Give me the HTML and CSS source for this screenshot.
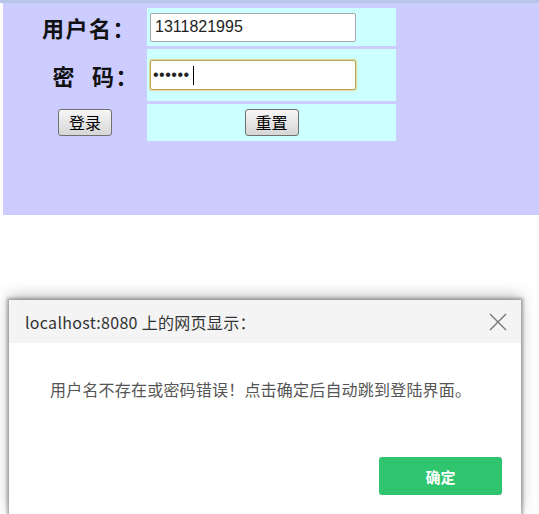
FILE: index.html
```html
<!DOCTYPE html>
<html lang="zh-CN">
<head>
<meta charset="utf-8">
<title>登录</title>
<link rel="stylesheet" href="styles.css">
</head>
<body>
<div class="topbar"></div>
<div class="panel">
  <div class="form">
    <div class="label row1">用户名：</div>
    <div class="field"><input class="inp" type="text" value="1311821995"></div>
    <div class="label row2">密<span class="sp"></span>码：</div>
    <div class="field"><span class="pwwrap"><input class="inp focus" type="password" value="123456"><span class="caret"></span></span></div>
    <div class="label row3"><button class="btn">登录</button></div>
    <div class="field center"><button class="btn">重置</button></div>
  </div>
</div>
<div class="dialog">
  <div class="dlg-head">
    <span class="dlg-title">localhost:8080 上的网页显示：</span>
    <svg class="close" width="18" height="18" viewBox="0 0 18 18"><path d="M1 1 L17 17 M17 1 L1 17" stroke="#777" stroke-width="1.4" fill="none"/></svg>
  </div>
  <div class="dlg-body">
    <p class="msg">用户名不存在或密码错误！点击确定后自动跳到登陆界面。</p>
    <div class="actions"><button class="ok">确定</button></div>
  </div>
</div>
</body>
</html>
```
FILE: styles.css
```css
html, body {
  margin: 0;
  padding: 0;
  background: #ffffff;
  overflow: hidden;
}
.topbar {
  height: 3px;
  background: #b7c6ea;
}
.panel {
  margin-left: 3px;
  height: 207px;
  padding-top: 5px;
  background: #ccccff;
}
.form {
  display: grid;
  grid-template-columns: 142px 249px;
  grid-template-rows: 38px 52px 37px;
  column-gap: 2px;
  row-gap: 3px;
}
.label {
  display: flex;
  align-items: center;
  justify-content: flex-end;
  padding-right: 9px;
  font-family: "Noto Sans CJK SC", sans-serif;
  font-weight: 700;
  font-size: 22px;
  color: #111;
  letter-spacing: 1.5px;
}
.label.row2 {
  padding-right: 6px;
}
.sp {
  display: inline-block;
  width: 16px;
}
.label.row3 {
  justify-content: center;
  padding-right: 0;
  padding-left: 22px;
}
.field {
  background: #ccffff;
  display: flex;
  align-items: center;
  padding-left: 3px;
}
.field.center {
  justify-content: center;
  padding-left: 0;
}
.pwwrap {
  position: relative;
  display: inline-block;
}
.inp {
  box-sizing: border-box;
  width: 206px;
  height: 29px;
  margin: 0;
  padding: 0 4px;
  border: 1px solid #a7a7a7;
  border-radius: 2px;
  background: #fff;
  font-family: "Liberation Sans", Arial, sans-serif;
  font-size: 16px;
  color: #222;
  outline: none;
}
.inp.focus {
  height: 30px;
  padding: 0 2px;
  border: 1px solid #bba650;
  box-shadow: 0 0 1px 1px #e3d9a0;
  letter-spacing: 0.5px;
}
.caret {
  position: absolute;
  left: 43px;
  top: 6px;
  width: 1px;
  height: 19px;
  background: #000;
}
.btn {
  box-sizing: border-box;
  width: 54px;
  height: 27px;
  margin: 0;
  padding: 0;
  border: 1px solid #707070;
  border-radius: 3px;
  background: linear-gradient(#f7f7f7, #e6e6e6 50%, #d6d6d6);
  font-family: "Noto Sans CJK SC", sans-serif;
  font-size: 16px;
  color: #000;
  line-height: 25px;
}
.dialog {
  margin-top: 85px;
  margin-left: 9px;
  width: 512px;
  height: 214px;
  background: #fff;
  box-shadow: 0 -4px 14px rgba(0,0,0,0.25), 0 0 3px 2px rgba(0,0,0,0.3);
}
.dlg-head {
  height: 43px;
  background: #f4f4f4;
  display: flex;
  align-items: center;
  justify-content: space-between;
  padding: 0 14px 0 16px;
}
.dlg-title {
  font-family: "Noto Sans CJK SC", sans-serif;
  font-size: 16px;
  letter-spacing: 0.3px;
  color: #333;
}
.close {
  display: block;
}
.dlg-body {
  padding-top: 34px;
}
.msg {
  margin: 0;
  padding-left: 41px;
  font-family: "Noto Sans CJK SC", sans-serif;
  font-size: 16px;
  line-height: 24px;
  color: #555;
  letter-spacing: 0.2px;
}
.actions {
  display: flex;
  justify-content: flex-end;
  padding-right: 19px;
  margin-top: 56px;
}
.ok {
  width: 123px;
  height: 38px;
  border: none;
  border-radius: 3px;
  background: #2ec56e;
  color: #fff;
  font-family: "Noto Sans CJK SC", sans-serif;
  font-size: 15px;
  font-weight: 700;
}
```
